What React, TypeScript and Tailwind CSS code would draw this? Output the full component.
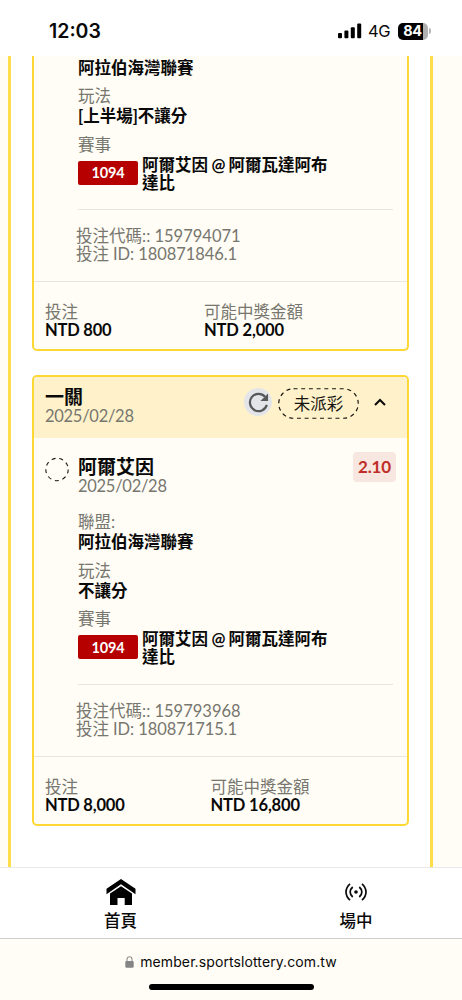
import React from "react";

type Bet = {
  play: string;
  code: string;
  id: string;
  stake: string;
  payout: string;
  stakeWidth: string;
};

const bets: Bet[] = [
  { play: "[上半場]不讓分", code: "159794071", id: "180871846.1", stake: "NTD 800", payout: "NTD 2,000", stakeWidth: "w-[159px]" },
  { play: "不讓分", code: "159793968", id: "180871715.1", stake: "NTD 8,000", payout: "NTD 16,800", stakeWidth: "w-[165.5px]" },
];

const LEAGUE = "阿拉伯海灣聯賽";

function Field({ label, value }: { label: string; value: string }) {
  return (
    <div className="h-[48.5px] leading-[20px]">
      <div className="text-[#77766f]">{label}</div>
      <div className="font-bold">{value}</div>
    </div>
  );
}

function Match() {
  return (
    <>
      <div className="leading-[20px] text-[#77766f]">賽事</div>
      <div className="flex items-start">
        <span className="mt-[6px] mr-[4px] flex h-6 w-[60px] items-center justify-center rounded-[2px] bg-[#b60000] pt-px text-[14.5px] tracking-[-0.2px] font-bold text-white">1094</span>
        <div className="pt-px leading-[18px] font-bold">
          阿爾艾因<span className="tracking-[-0.5px]"> @ </span>阿爾瓦達阿布
          <br />
          達比
        </div>
      </div>
    </>
  );
}

function BetFooter({ bet }: { bet: Bet }) {
  return (
    <>
      <div className="h-[72px] border-b border-[#eae6df] pt-[17px] pl-[42px] leading-[18px] text-[#77766f]">
        <div>投注代碼:: {bet.code}</div>
        <div className="tracking-[-0.07px]">投注 ID: {bet.id}</div>
      </div>
      <footer className="flex pt-[21px] pl-[11px] leading-[18px]">
        <div className={bet.stakeWidth}>
          <div className="text-[#77766f]">投注</div>
          <div className="tracking-[-0.2px] font-bold">{bet.stake}</div>
        </div>
        <div>
          <div className="text-[#77766f]">可能中獎金額</div>
          <div className="tracking-[-0.15px] font-bold">{bet.payout}</div>
        </div>
      </footer>
    </>
  );
}

/* Card continuing from above the scroll area */
function ScrolledCard({ bet }: { bet: Bet }) {
  return (
    <section className="h-[295px] shrink-0 rounded-b-[5px] border-2 border-t-0 border-[#fdd835] bg-[#fffdf5]">
      <div className="ml-[44px] h-[154px] w-[315px] border-b border-[#e9e4dc]">
        <div className="h-[30px] pt-[2px] leading-[20px] font-bold">{LEAGUE}</div>
        <Field label="玩法" value={bet.play} />
        <Match />
      </div>
      <BetFooter bet={bet} />
    </section>
  );
}

function BetCard({ bet }: { bet: Bet }) {
  return (
    <section className="h-[451px] shrink-0 rounded-[5px] border-2 border-[#fdd835] bg-[#fffdf5]">
      <header className="flex h-[61px] items-start rounded-t-[3px] bg-[#fff2cb] pl-[11px]">
        <div className="w-[199px] pt-[9px]">
          <div className="text-[19px] leading-[21px] font-bold">一關</div>
          <div className="leading-[19px] tracking-[-0.28px] text-[#77766f]">2025/02/28</div>
        </div>
        <div className="mt-[11px] flex size-7 items-center justify-center rounded-full bg-[#e3e5e8]">
          <svg viewBox="0 0 24 24" className="size-[23px]" fill="none" stroke="#57585a" strokeWidth="2.3">
            <path d="M18.8 6A9 9 0 1 0 20.7 14.5" />
            <path d="M22 2.5V10.5H14Z" fill="#57585a" stroke="none" />
          </svg>
        </div>
        <div className="relative mt-[11px] ml-[6px] flex h-[31px] w-[81px] items-center justify-center text-[#171610]">
          <svg className="absolute inset-0" width="81" height="31" fill="none">
            <rect x=".75" y=".75" width="79.5" height="29.5" rx="14.75" stroke="#171610" strokeWidth="1.2" strokeDasharray="4 3.7" />
          </svg>
          <span className="pt-px">未派彩</span>
        </div>
        <svg className="mt-[19px] ml-[15px]" width="12" height="12" fill="none" stroke="#090909" strokeWidth="2">
          <path d="M1 9L6 4L11 9" />
        </svg>
      </header>

      <div className="flex h-[74px] items-start pl-[11px]">
        <svg className="mt-[19px] mr-[9px]" width="24" height="25" viewBox="0 0 24 25" fill="none">
          <circle cx="12" cy="12.5" r="11.2" stroke="#171610" strokeWidth="1.1" strokeDasharray="4 3.82" />
        </svg>
        <div className="w-[275px] pt-[18px]">
          <div className="text-[19px] leading-[21px] font-bold">阿爾艾因</div>
          <div className="leading-[19px] tracking-[-0.28px] text-[#77766f]">2025/02/28</div>
        </div>
        <div className="mt-[14px] flex h-[30px] w-[43px] items-center justify-center rounded-[4px] bg-[#f8e7e0] text-[17px] tracking-[-0.2px] font-bold text-[#bf2e28]">2.10</div>
      </div>

      <div className="ml-[44px] h-[173px] w-[315px] border-b border-[#e9e4dc]">
        <Field label="聯盟:" value={LEAGUE} />
        <Field label="玩法" value={bet.play} />
        <Match />
      </div>
      <BetFooter bet={bet} />
    </section>
  );
}

export default function App() {
  return (
    <div className="flex h-[1000px] w-[462px] flex-col overflow-hidden bg-[#fffdf5] font-['Lato','Noto_Sans_CJK_TC',sans-serif] text-[16.5px] text-[#090909]">
      <div className="flex h-[56px] shrink-0 items-center bg-white pt-[6px] pl-[49px] font-['Inter',sans-serif]">
        <div className="w-[289px] text-[19.5px] leading-6 font-semibold">12:03</div>
        <svg width="24" height="16" viewBox="0 0 24 16" fill="#000">
          <rect x="0" y="10" width="4" height="5.3" rx="1" />
          <rect x="6.4" y="7.5" width="4" height="7.8" rx="1" />
          <rect x="12.8" y="4.3" width="4" height="11" rx="1" />
          <rect x="19.2" y="0.5" width="4" height="14.8" rx="1" />
        </svg>
        <span className="ml-[6px] w-[30px] text-[16.5px] tracking-[-0.3px]">4G</span>
        <div className="flex h-[17px] w-[30px] items-center justify-center rounded-[5px] bg-[linear-gradient(90deg,#000_84%,#b0b0b0_84%)] pr-px text-[14.5px] leading-none tracking-[-0.3px] font-bold text-white">84</div>
        <div className="ml-px h-[6px] w-[2px] rounded-r-full bg-[#b5b5b5]" />
      </div>

      <main className="h-[811px] shrink-0 px-[8px]">
        <div className="flex h-full w-[425px] flex-col gap-6 border-x-[3px] border-[#fddd49] bg-white px-[21px]">
          <ScrolledCard bet={bets[0]} />
          <BetCard bet={bets[1]} />
        </div>
      </main>

      <nav className="flex h-[72px] shrink-0 border-t border-b border-t-[#e8e8e8] border-b-[#cdcfcf] bg-white font-medium">
        <div className="flex w-[241px] shrink-0 flex-col items-center pt-[11px]">
          <svg width="30" height="27" viewBox="0 0 30 27">
            <path d="M.5 12.5V9.8L15 0L29.5 9.8V15.3L15 5.2L.5 15.3Z" />
            <path d="M4 14.5L15 7.2L26 14.5V26H18.7V19H11.5V26H4Z" />
          </svg>
          <span className="mt-[3px] leading-6">首頁</span>
        </div>
        <div className="flex w-[230px] shrink-0 flex-col items-center pt-[15px]">
          <svg width="22" height="18" viewBox="0 0 22 18" fill="none" stroke="#090909" strokeWidth="1.7">
            <path d="M5 .8C-.3 5.5-.3 12.5 5 17.2M17 .8c5.3 4.7 5.3 11.7 0 16.4M7.7 4C4.3 7 4.3 11 7.7 14M14.3 4c3.4 3 3.4 7 0 10" />
            <circle cx="11" cy="9" r="1.8" fill="#090909" stroke="none" />
          </svg>
          <span className="mt-[8px] leading-6">場中</span>
        </div>
      </nav>

      <footer className="flex flex-1 flex-col items-center font-['Inter',sans-serif]">
        <div className="flex h-[45px] items-center gap-[6px] text-[14px] tracking-[0.1px]">
          <svg width="9" height="12" viewBox="0 0 9 12">
            <path d="M2 5V3.2a2.5 2.5 0 0 1 5 0V5" fill="none" stroke="#909090" strokeWidth="1.1" />
            <rect x=".3" y="5" width="8.4" height="6.7" rx="1.2" fill="#858585" />
          </svg>
          <span>member.sportslottery.com.tw</span>
        </div>
        <div className="h-[6px] w-[165px] rounded-full bg-black" />
      </footer>
    </div>
  );
}
